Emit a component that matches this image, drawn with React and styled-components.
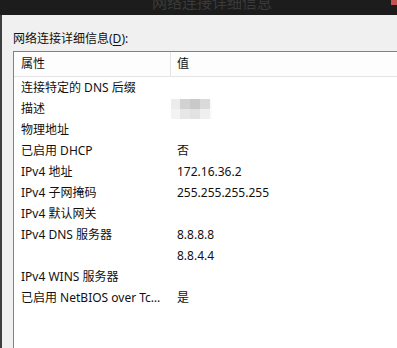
import React from "react";
import styled, { createGlobalStyle } from "styled-components";

const Global = createGlobalStyle`
  html, body { margin: 0; padding: 0; background: #f0f0f0; overflow: hidden; }
  body { width: 397px; height: 348px; font-family: "Noto Sans", "Noto Sans CJK SC", sans-serif; }
`;

const Window = styled.div`
  width: 397px;
  height: 348px;
  display: flex;
  flex-direction: column;
  overflow: hidden;
`;

const TitleBar = styled.div`
  height: 15px;
  flex: none;
  background: #1c1c1c;
  display: flex;
  align-items: flex-start;
  overflow: hidden;
`;

const Title = styled.div`
  margin-left: 152px;
  margin-top: -8px;
  font-family: "Noto Sans CJK SC", sans-serif;
  font-size: 15px;
  line-height: 20px;
  color: #3a3a3a;
  letter-spacing: 0px;
`;

const CloseBtn = styled.div`
  margin-left: auto;
  width: 6px;
  height: 5px;
  background: #c75050;
`;

const Main = styled.div`
  flex: 1;
  display: flex;
  min-height: 0;
`;

const Frame = styled.div`
  width: 2px;
  flex: none;
  background: #3e3e3e;
`;

const Dialog = styled.div`
  flex: 1;
  display: flex;
  flex-direction: column;
  padding: 16px 0 0 11px;
  min-width: 0;
`;

const Label = styled.div`
  font-size: 12px;
  line-height: 16px;
  color: #111;
  margin-bottom: 4px;
  u { text-decoration-thickness: 1px; text-underline-offset: 2px; }
`;

const List = styled.div`
  width: 420px;
  height: 400px;
  background: #ffffff;
  border-top: 1px solid #828282;
  border-left: 1px solid #828282;
  font-size: 12px;
  color: #111;
`;

const Row = styled.div`
  display: grid;
  grid-template-columns: 156px 1px 1fr;
  height: ${(p) => (p.$header ? "24px" : "21px")};
  align-items: center;
  background: ${(p) => (p.$header ? "#fdfdfd" : "transparent")};
  border-bottom: ${(p) => (p.$header ? "1px solid #e5e5e5" : "none")};
`;

const Divider = styled.div`
  align-self: stretch;
  background: ${(p) => (p.$show ? "#e5e5e5" : "transparent")};
`;

const Cell = styled.div`
  padding-left: ${(p) => (p.$value ? "6px" : "7px")};
  padding-right: 4px;
  white-space: nowrap;
  overflow: hidden;
  text-overflow: ellipsis;
  line-height: 16px;
`;

const Mosaic = styled.div`
  margin-left: -7px;
  display: grid;
  grid-template-columns: repeat(4, 10px);
  grid-template-rows: repeat(2, 10px);
  width: 40px;
  box-shadow: 0 0 3px 1px #f6f6f6;
`;

const Tile = styled.div`
  background: ${(p) => p.$c};
`;

const mosaicColors = [
  "#ececec", "#d2d2d2", "#c9c9c9", "#dadada",
  "#f3f3f3", "#e7e7e7", "#e2e2e2", "#efefef",
];

const rows = [
  ["连接特定的 DNS 后缀", ""],
  ["描述", "__mosaic__"],
  ["物理地址", ""],
  ["已启用 DHCP", "否"],
  ["IPv4 地址", "172.16.36.2"],
  ["IPv4 子网掩码", "255.255.255.255"],
  ["IPv4 默认网关", ""],
  ["IPv4 DNS 服务器", "8.8.8.8"],
  ["", "8.8.4.4"],
  ["IPv4 WINS 服务器", ""],
  ["已启用 NetBIOS over Tcpip", "是"],
];

export default function App() {
  return (
    <>
      <Global />
      <Window>
        <TitleBar>
          <Title>网络连接详细信息</Title>
          <CloseBtn />
        </TitleBar>
        <Main>
          <Frame />
          <Dialog>
            <Label>
              网络连接详细信息(<u>D</u>):
            </Label>
            <List>
              <Row $header>
                <Cell>属性</Cell>
                <Divider $show />
                <Cell $value>值</Cell>
              </Row>
              {rows.map(([k, v], i) => (
                <Row key={i}>
                  <Cell>{k}</Cell>
                  <Divider />
                  {v === "__mosaic__" ? (
                    <Cell $value>
                      <Mosaic>
                        {mosaicColors.map((c, j) => (
                          <Tile key={j} $c={c} />
                        ))}
                      </Mosaic>
                    </Cell>
                  ) : (
                    <Cell $value>{v}</Cell>
                  )}
                </Row>
              ))}
            </List>
          </Dialog>
        </Main>
      </Window>
    </>
  );
}
